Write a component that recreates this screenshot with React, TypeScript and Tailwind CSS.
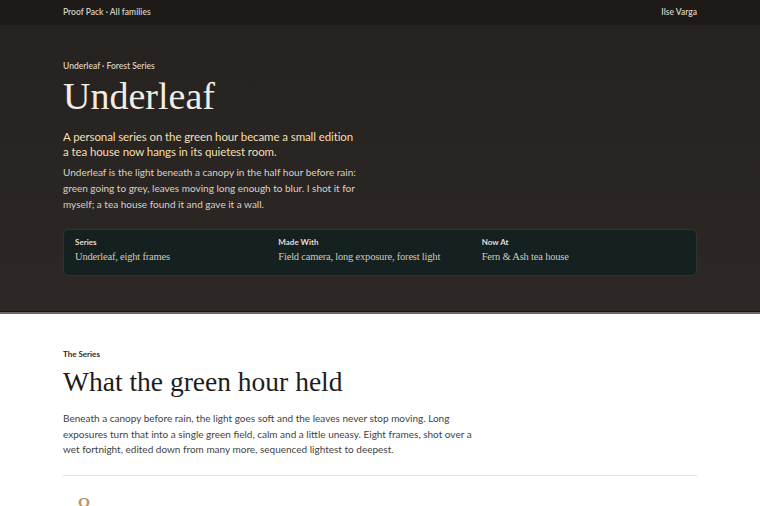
import React from "react";

const sans = "font-['Lato','Noto_Sans',sans-serif]";
const serif = "font-['Liberation_Serif','DejaVu_Serif',serif]";

function Fact({ label, value }: { label: string; value: string }) {
  return (
    <div className="flex flex-col">
      <span className={`${sans} text-[8px] font-bold leading-[12px] text-[#e6ddd0]`}>{label}</span>
      <span className={`${serif} mt-[2px] text-[10.5px] leading-[14px] tracking-[-0.2px] text-[#cfc8bd]`}>{value}</span>
    </div>
  );
}

export default function App() {
  return (
    <div className="min-h-screen bg-white">
      <header className="h-[25px] bg-[#1d1a18]">
        <div className={`mx-auto flex h-full max-w-[634px] items-center justify-between ${sans} text-[8.5px] font-semibold text-[#d8cfc2]`}>
          <span>Proof Pack · All families</span>
          <span>Ilse Varga</span>
        </div>
      </header>

      <section className="border-b-2 border-[#6b6863] bg-gradient-to-b from-[#252220] to-[#2d2825] pb-[36px] pt-[35px] shadow-[inset_0_-1px_0_#141210]">
        <div className="mx-auto max-w-[634px]">
          <p className={`${sans} text-[8.5px] font-semibold leading-[12px] text-[#d8cfc2]`}>Underleaf · Forest Series</p>
          <h1 className={`${serif} mt-[2px] text-[38px] leading-[44px] text-[#f1ece4]`}>Underleaf</h1>
          <p className={`${sans} mt-[11px] max-w-[294px] text-[11.5px] leading-[15px] tracking-[-0.1px] text-[#f3dfb5]`}>
            A personal series on the green hour became a small edition a tea house now hangs in its quietest room.
          </p>
          <p className={`${sans} mt-[5px] max-w-[295px] text-[10px] leading-[16px] text-[#d9d1c6]`}>
            Underleaf is the light beneath a canopy in the half hour before rain: green going to grey, leaves moving long enough to blur. I shot it for myself; a tea house found it and gave it a wall.
          </p>
          <div className="mt-[17px] grid grid-cols-3 rounded-[6px] border border-[#2f3533] bg-[#152020] px-[11px] pb-[11px] pt-[6px]">
            <Fact label="Series" value="Underleaf, eight frames" />
            <Fact label="Made With" value="Field camera, long exposure, forest light" />
            <Fact label="Now At" value="Fern & Ash tea house" />
          </div>
        </div>
      </section>

      <section className="mx-auto max-w-[634px] pt-[34px]">
        <p className={`${sans} text-[8px] font-bold leading-[12px] text-[#2a2a2a]`}>The Series</p>
        <h2 className={`${serif} mt-[5px] text-[27.5px] leading-[34px] text-[#1c1c1c]`}>What the green hour held</h2>
        <p className={`${sans} mt-[12px] max-w-[412px] text-[10px] leading-[15.5px] text-[#3f3f3f]`}>
          Beneath a canopy before rain, the light goes soft and the leaves never stop moving. Long exposures turn that into a single green field, calm and a little uneasy. Eight frames, shot over a wet fortnight, edited down from many more, sequenced lightest to deepest.
        </p>
        <div className="mt-[17px] h-px bg-[#e4e2df]" />
        <div className="pl-[14px] pt-[16px]">
          <span className={`${serif} text-[28px] leading-[30px] text-[#b8956a]`}>8</span>
        </div>
      </section>
    </div>
  );
}
